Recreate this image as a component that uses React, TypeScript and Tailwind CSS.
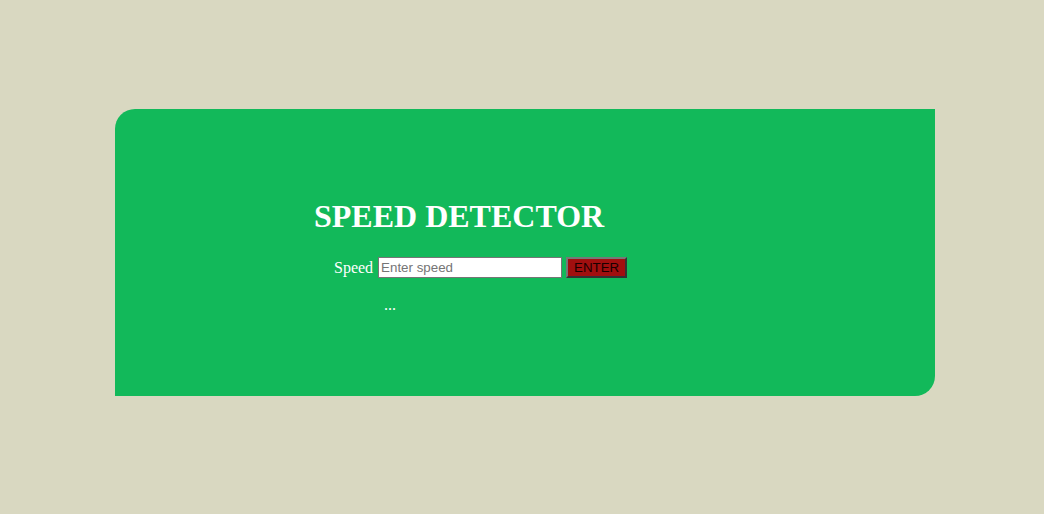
export default function App() {
  return (
    <div className="min-h-[514px] bg-[#d9d8c1] pt-[109px] font-['Liberation_Serif',serif]">
      <div className="ml-[115px] h-[287px] w-[820px] rounded-tl-[20px] rounded-br-[20px] bg-[#12b95a] pl-[199px] pt-[91px] text-white">
        <h1 className="text-[32px] font-bold leading-8">SPEED DETECTOR</h1>
        <div className="mt-[25px] flex h-[21px] items-center pl-[20px]">
          <span className="text-[16px] leading-5">Speed</span>
          <input
            type="text"
            placeholder="Enter speed"
            className="ml-[5px] h-[21px] w-[184px] border border-[#767676] bg-white px-[2px] font-['Liberation_Sans',sans-serif] text-[13.33px] text-black placeholder:text-[#757575] outline-none"
          />
          <button
            type="button"
            className="ml-[4px] h-[21px] w-[61px] border-2 border-t-[#777] border-l-[#777] border-r-[#333] border-b-[#333] bg-[#a10f0f] font-['Liberation_Sans',sans-serif] text-[13.33px] leading-none text-[#1a0000]"
          >
            ENTER
          </button>
        </div>
        <p className="mt-[17px] pl-[70px] text-[16px] leading-5">...</p>
      </div>
    </div>
  );
}
